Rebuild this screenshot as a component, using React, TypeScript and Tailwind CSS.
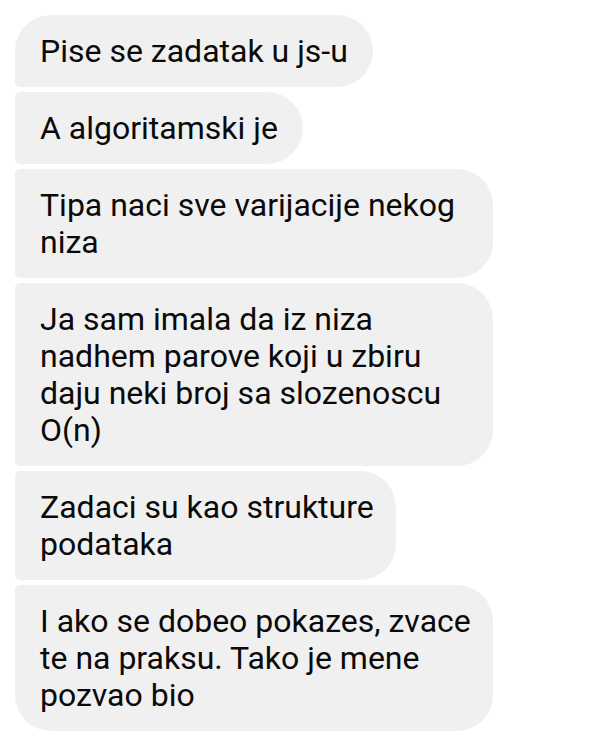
import React from 'react';

type Msg = { lines: string[]; width: string; corners: string };

const messages: Msg[] = [
  { lines: ['Pise se zadatak u js-u'], width: 'w-fit', corners: 'rounded-tl-[36px] rounded-bl-[5px]' },
  { lines: ['A algoritamski je'], width: 'w-fit', corners: 'rounded-l-[5px]' },
  { lines: ['Tipa naci sve varijacije nekog', 'niza'], width: 'w-[478px]', corners: 'rounded-l-[5px]' },
  {
    lines: ['Ja sam imala da iz niza', 'nadhem parove koji u zbiru', 'daju neki broj sa slozenoscu', 'O(n)'],
    width: 'w-[478px]',
    corners: 'rounded-l-[5px]',
  },
  { lines: ['Zadaci su kao strukture', 'podataka'], width: 'w-[381px]', corners: 'rounded-l-[5px]' },
  {
    lines: ['I ako se dobeo pokazes, zvace', 'te na praksu. Tako je mene', 'pozvao bio'],
    width: 'w-[478px]',
    corners: 'rounded-tl-[5px] rounded-bl-[36px]',
  },
];

const App: React.FC = () => {
  return (
    <div
      className="w-[615px] h-[744px] bg-white pt-[15px] pl-[15px] flex flex-col gap-[5px] overflow-hidden"
      style={{ fontFamily: 'Roboto, "Noto Sans", sans-serif' }}
    >
      {messages.map((m, i) => (
        <div
          key={i}
          className={`${m.width} bg-[#f1f0f0] rounded-r-[36px] ${m.corners} pl-[25px] pr-[25px] pt-[18px] pb-[17px] text-[32px] leading-[37px] text-[#0a0a0a]`}
        >
          {m.lines.map((l, j) => (
            <div key={j} className="whitespace-nowrap">
              {l}
            </div>
          ))}
        </div>
      ))}
    </div>
  );
};

export default App;
